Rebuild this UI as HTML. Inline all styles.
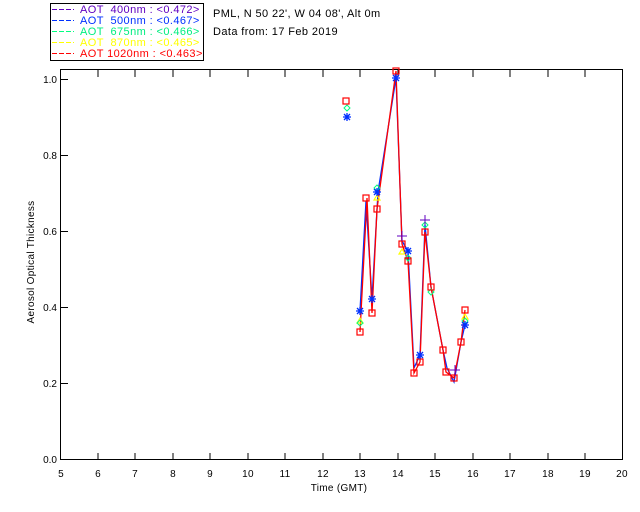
<!DOCTYPE html>
<html><head><style>
body{margin:0;background:#fff;}
svg{display:block;font-family:"Liberation Sans",sans-serif;}
text{white-space:pre;}
</style></head><body>
<svg width="640" height="512" xmlns="http://www.w3.org/2000/svg" shape-rendering="crispEdges">
<rect x="50.5" y="3.5" width="153" height="57" fill="none" stroke="#000"/>
<g font-size="11" letter-spacing="0.4">
<line x1="52" y1="9.5" x2="74" y2="9.5" stroke="#6000c0" stroke-dasharray="5,2"/><text x="80" y="13" fill="#6000c0" xml:space="preserve">AOT  400nm : &lt;0.472&gt;</text>
<line x1="52" y1="20.5" x2="74" y2="20.5" stroke="#0030ff" stroke-dasharray="5,2"/><text x="80" y="24" fill="#0030ff" xml:space="preserve">AOT  500nm : &lt;0.467&gt;</text>
<line x1="52" y1="31.5" x2="74" y2="31.5" stroke="#00ff80" stroke-dasharray="5,2"/><text x="80" y="35" fill="#00ee80" xml:space="preserve">AOT  675nm : &lt;0.466&gt;</text>
<line x1="52" y1="42.5" x2="74" y2="42.5" stroke="#ffff00" stroke-dasharray="5,2"/><text x="80" y="46" fill="#ffff00" xml:space="preserve">AOT  870nm : &lt;0.465&gt;</text>
<line x1="52" y1="53.5" x2="74" y2="53.5" stroke="#ff0000" stroke-dasharray="5,2"/><text x="80" y="57" fill="#ff0000" xml:space="preserve">AOT 1020nm : &lt;0.463&gt;</text>
<text x="213" y="17" fill="#000">PML, N 50 22', W 04 08', Alt 0m</text>
<text x="213" y="35" fill="#000">Data from: 17 Feb 2019</text>
</g>
<rect x="60.5" y="69.5" width="562" height="390" fill="none" stroke="#000"/>
<g stroke="#000">
<path d="M98 460v-7M135 460v-7M173 460v-7M210 460v-7M248 460v-7M285 460v-7M323 460v-7M360 460v-7M398 460v-7M435 460v-7M473 460v-7M510 460v-7M548 460v-7M585 460v-7"/>
<path d="M98 70v7M135 70v7M173 70v7M210 70v7M248 70v7M285 70v7M323 70v7M360 70v7M398 70v7M435 70v7M473 70v7M510 70v7M548 70v7M585 70v7"/>
<path d="M61 79.5h7M61 155.5h7M61 231.5h7M61 307.5h7M61 383.5h7"/>
</g>
<g font-size="10" fill="#000" text-anchor="middle" letter-spacing="0.3">
<text x="61" y="477">5</text><text x="98" y="477">6</text><text x="135" y="477">7</text><text x="173" y="477">8</text><text x="210" y="477">9</text><text x="248" y="477">10</text><text x="285" y="477">11</text><text x="323" y="477">12</text><text x="360" y="477">13</text><text x="398" y="477">14</text><text x="435" y="477">15</text><text x="473" y="477">16</text><text x="510" y="477">17</text><text x="548" y="477">18</text><text x="585" y="477">19</text><text x="622" y="477">20</text>
<text x="339" y="491">Time (GMT)</text>
</g>
<g font-size="10" fill="#000" text-anchor="end">
<text x="57" y="83">1.0</text><text x="57" y="159">0.8</text><text x="57" y="235">0.6</text><text x="57" y="311">0.4</text><text x="57" y="387">0.2</text><text x="57" y="463">0.0</text>
</g>
<text x="0" y="0" font-size="10" text-anchor="middle" letter-spacing="0.3" transform="translate(34,262) rotate(-90)">Aerosol Optical Thickness</text>
<g fill="none" shape-rendering="auto">
<polyline stroke="#0030ff" stroke-width="1.3" points="360,311 366,201 372,299 378,192 396,78 402,241 408,251 414,368 420,355 425,225 431,287 443,350 447,368 454,382 461,342 465,325"/>
<polyline stroke="#ff0000" stroke-width="1.3" points="360,332 367,198 372,313 377,209 396,71 402,244 408,261 414,373 420,362 425,232 431,287 443,350 446,372 454,378 461,342 465,310"/>
<g stroke="#ffff00" stroke-width="1.2"><path d="M360 318l3 5h-6z M402 249l3 5h-6z M377 195l3 5h-6z M465 314l3 5h-6z"/></g>
<g stroke="#00ff80"><path d="M347 105l3 3-3 3-3-3z M377 185l3 3-3 3-3-3z M360 320l3 3-3 3-3-3z M408 255l3 3-3 3-3-3z M425 222l3 3-3 3-3-3z M431 289l3 3-3 3-3-3z M465 318l3 3-3 3-3-3z"/></g>
<g stroke="#ff0000" stroke-width="1.2">
<rect x="343" y="98" width="6" height="6"/><rect x="357" y="329" width="6" height="6"/><rect x="363" y="195" width="6" height="6"/><rect x="369" y="310" width="6" height="6"/><rect x="374" y="206" width="6" height="6"/><rect x="393" y="68" width="6" height="6"/><rect x="399" y="241" width="6" height="6"/><rect x="405" y="258" width="6" height="6"/><rect x="411" y="370" width="6" height="6"/><rect x="417" y="359" width="6" height="6"/><rect x="422" y="229" width="6" height="6"/><rect x="428" y="284" width="6" height="6"/><rect x="440" y="347" width="6" height="6"/><rect x="443" y="369" width="6" height="6"/><rect x="451" y="375" width="6" height="6"/><rect x="458" y="339" width="6" height="6"/><rect x="462" y="307" width="6" height="6"/>
</g>
<g stroke="#0030ff" stroke-width="1.3">
<path d="M347 113v8M343 117h8M344 114l6 6M350 114l-6 6"/>
<path d="M360 307v8M356 311h8M357 308l6 6M363 308l-6 6"/>
<path d="M372 295v8M368 299h8M369 296l6 6M375 296l-6 6"/>
<path d="M377 188v8M373 192h8M374 189l6 6M380 189l-6 6"/>
<path d="M396 74v8M392 78h8M393 75l6 6M399 75l-6 6"/>
<path d="M408 247v8M404 251h8M405 248l6 6M411 248l-6 6"/>
<path d="M420 351v8M416 355h8M417 352l6 6M423 352l-6 6"/>
<path d="M465 321v8M461 325h8M462 322l6 6M468 322l-6 6"/>
</g>
<g stroke="#6000c0"><path d="M402 231v10M397 236h10M425 215v10M420 220h10M455 365v10M450 370h10"/></g>
</g>
</svg>
</body></html>
